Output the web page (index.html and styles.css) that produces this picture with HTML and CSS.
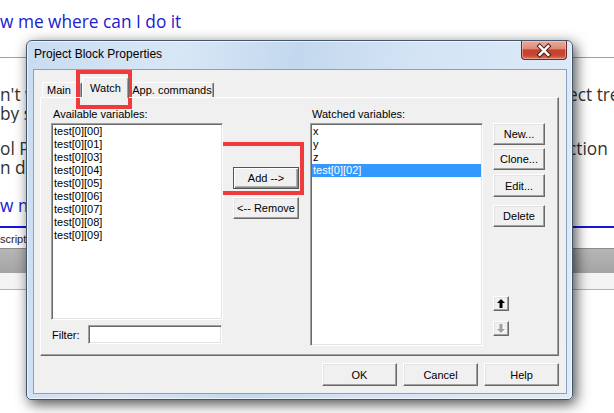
FILE: index.html
```html
<!DOCTYPE html>
<html lang="en">
<head>
  <meta charset="UTF-8">
  <title>Project Block Properties</title>
  <link rel="stylesheet" href="styles.css">
</head>
<body>
  <div class="page">
    <div class="page-link">w me where can I do it</div>
    <div class="page-rule"></div>
    <div class="page-para">
      <div class="page-line"><span>n't want to type it by hand</span><span class="right-bit">ect tree</span></div>
      <div class="page-line"><span>by selecting the variable</span></div>
    </div>
    <div class="page-para">
      <div class="page-line"><span>ol Project Block</span><span class="right-bit">ction</span></div>
      <div class="page-line"><span>n dialog</span></div>
    </div>
    <div class="page-link page-link-2">w me</div>
    <div class="page-blue-rule"></div>
    <div class="page-tabs"><span>scription</span></div>
    <div class="page-grey-band"></div>
    <div class="page-light-band"></div>
  </div>

  <div class="dialog">
    <div class="titlebar">
      <span class="title">Project Block Properties</span>
      <button class="close-btn">
        <svg width="46" height="19" viewBox="0 0 46 19">
          <path d="M18.5 5 L27.5 14 M27.5 5 L18.5 14" stroke="#4a1f17" stroke-width="4.6" stroke-linecap="square"/>
          <path d="M18.5 5 L27.5 14 M27.5 5 L18.5 14" stroke="#fff" stroke-width="2.6" stroke-linecap="square"/>
        </svg>
      </button>
    </div>

    <div class="client">
      <div class="tabs">
        <div class="tab tab-main">Main</div>
        <div class="tab tab-watch active">Watch</div>
        <div class="tab tab-app">App. commands</div>
      </div>

      <div class="pane">
        <div class="col col-avail">
          <div class="lbl">Available variables:</div>
          <ul class="listbox list-avail">
            <li>test[0][00]</li>
            <li>test[0][01]</li>
            <li>test[0][03]</li>
            <li>test[0][04]</li>
            <li>test[0][05]</li>
            <li>test[0][06]</li>
            <li>test[0][07]</li>
            <li>test[0][08]</li>
            <li>test[0][09]</li>
          </ul>
          <div class="filter-row">
            <label for="filter">Filter:</label>
            <input id="filter" class="filter-input" type="text">
          </div>
        </div>

        <div class="col col-move">
          <button class="btn btn-default btn-add">Add --&gt;</button>
          <button class="btn btn-remove">&lt;-- Remove</button>
        </div>

        <div class="col col-watched">
          <div class="lbl">Watched variables:</div>
          <ul class="listbox list-watched">
            <li>x</li>
            <li>y</li>
            <li>z</li>
            <li class="selected">test[0][02]</li>
          </ul>
        </div>

        <div class="col col-actions">
          <button class="btn btn-new">New...</button>
          <button class="btn btn-clone">Clone...</button>
          <button class="btn btn-edit">Edit...</button>
          <button class="btn btn-delete">Delete</button>
          <button class="btn arrow-btn arrow-up">
            <svg width="8" height="9" viewBox="0 0 8 9"><polygon points="4,0 8,4 5.5,4 5.5,9 2.5,9 2.5,4 0,4" fill="#000"/></svg>
          </button>
          <button class="btn arrow-btn arrow-down">
            <svg width="9" height="10" viewBox="0 0 9 10">
              <polygon points="5,10 9,6 6.5,6 6.5,1 3.5,1 3.5,6 1,6" fill="#fff"/>
              <polygon points="4,9 8,5 5.5,5 5.5,0 2.5,0 2.5,5 0,5" fill="#a0a0a0"/>
            </svg>
          </button>
        </div>
      </div>

      <div class="footer-btns">
        <button class="btn btn-foot">OK</button>
        <button class="btn btn-foot">Cancel</button>
        <button class="btn btn-foot">Help</button>
      </div>
    </div>
  </div>

  <div class="mark mark-tab"></div>
  <div class="mark mark-add"></div>
</body>
</html>
```

FILE: styles.css
```css
* { margin: 0; padding: 0; box-sizing: border-box; }

body {
  width: 614px;
  height: 413px;
  overflow: hidden;
  background: #fff;
  font-family: "Open Sans", "DejaVu Sans", sans-serif;
  color: #333;
}

/* page behind the dialog */
.page {
  padding-top: 12px;
  white-space: nowrap;
}

.page-link {
  height: 20px;
  line-height: 20px;
  font-size: 17.3px;
  color: #2020d0;
}

.page-rule {
  margin-top: 25px;
  border-top: 1px solid #a0a0a0;
}

.page-para {
  margin-top: 27px;
}

.page-para + .page-para {
  margin-top: 16px;
}

.page-line {
  display: flex;
  justify-content: space-between;
  height: 19px;
  line-height: 19px;
  font-size: 17.3px;
  overflow: hidden;
}

.right-bit {
  width: 46px;
  overflow: hidden;
}

.page-link-2 {
  margin-top: 19px;
  height: 19px;
  line-height: 19px;
}

.page-blue-rule {
  margin-top: 11px;
  height: 2px;
  background: #1515e0;
}

.page-tabs {
  height: 21px;
  padding-top: 3px;
  font-size: 11px;
  line-height: 16px;
  color: #222;
  border-bottom: 1px solid #8c8c8c;
  font-family: "Liberation Sans", Arial, sans-serif;
}

.page-grey-band {
  height: 24px;
  background: linear-gradient(#b6b6b6, #a4a4a4);
}

.page-light-band {
  height: 17px;
  background: #f4f4f4;
  border-bottom: 1px solid #b4b4b4;
}

/* dialog window */
.dialog {
  position: absolute;
  left: 26px;
  top: 40px;
  width: 547px;
  height: 360px;
  display: flex;
  flex-direction: column;
  padding: 0 5px 5px 6px;
  border: 1px solid #45556a;
  border-radius: 6px 6px 5px 5px;
  background: linear-gradient(100deg, #c8dcf1 0%, #d8e7f6 25%, #c3d8ee 45%, #d4e4f5 65%, #dfebf8 100%);
  box-shadow: 3px 4px 14px rgba(0, 0, 0, 0.7), inset 0 0 0 1px rgba(255, 255, 255, 0.6);
  font-family: "Liberation Sans", Arial, sans-serif;
  font-size: 11px;
  color: #000;
}

.titlebar {
  height: 28px;
  display: flex;
  justify-content: space-between;
  align-items: flex-start;
}

.title {
  padding: 6px 0 0 1px;
  font-size: 12px;
  line-height: 15px;
  color: #000;
}

.close-btn {
  width: 46px;
  height: 19px;
  border: 1px solid #6e2b22;
  border-top: none;
  border-radius: 0 0 4px 4px;
  background: linear-gradient(#e9ab9d 0%, #de8a79 42%, #c5412c 50%, #c74630 78%, #d9765f 100%);
  box-shadow: inset 0 0 0 1px rgba(255, 220, 210, 0.45);
  display: flex;
  align-items: center;
  justify-content: center;
}

.close-btn svg {
  display: block;
}

.client {
  flex: 1;
  display: flex;
  flex-direction: column;
  padding: 7px 7px 0 6px;
  border: 1px solid #8aa0bb;
  background: #f0f0f0;
}

/* tabs */
.tabs {
  height: 20px;
  display: flex;
  align-items: flex-end;
  padding-left: 2px;
}

.tab {
  height: 15px;
  line-height: 14px;
  border-top: 1px solid #fff;
  border-left: 1px solid #fff;
  border-right: 1px solid #696969;
  border-radius: 2px 2px 0 0;
  box-shadow: inset -1px 0 0 #a0a0a0;
  background: #f0f0f0;
  text-align: center;
}

.tab-main {
  width: 40px;
  text-align: left;
  padding-left: 4px;
}

.tab-watch {
  width: 47px;
}

.tab-app {
  width: 84px;
  margin-left: 1px;
}

.tab.active {
  position: relative;
  z-index: 2;
  height: 21px;
  margin-bottom: -1px;
  line-height: 20px;
}

.pane {
  position: relative;
  z-index: 1;
  height: 259px;
  display: flex;
  padding: 9px 0 0 10px;
  border: 1px solid;
  border-color: #fff #696969 #696969 #fff;
  box-shadow: inset -1px -1px 0 #a0a0a0;
}

.col {
  display: flex;
  flex-direction: column;
  align-items: flex-start;
}

.lbl {
  height: 14px;
  line-height: 14px;
  margin: 0 0 2px 2px;
}

.listbox {
  list-style: none;
  background: #fff;
  padding: 1px;
  border: 1px solid;
  border-color: #a0a0a0 #fff #fff #a0a0a0;
  box-shadow: inset 1px 1px 0 #696969, inset -1px -1px 0 #e3e3e3;
  overflow: hidden;
}

.listbox li {
  height: 13px;
  line-height: 13px;
  padding-left: 1px;
}

.listbox li.selected {
  background: #3399ff;
  color: #fff;
}

.col-avail {
  width: 172px;
}

.list-avail {
  width: 172px;
  height: 197px;
}

.filter-row {
  margin-top: 5px;
  height: 19px;
  display: flex;
  align-items: center;
}

.filter-row label {
  width: 37px;
  padding-left: 1px;
}

.filter-input {
  width: 134px;
  height: 19px;
  border: 1px solid;
  border-color: #a0a0a0 #fff #fff #a0a0a0;
  box-shadow: inset 1px 1px 0 #696969, inset -1px -1px 0 #e3e3e3;
  background: #fff;
  outline: none;
}

.col-move {
  width: 66px;
  margin-left: 10px;
  padding-top: 60px;
}

.col-watched {
  width: 173px;
  margin-left: 11px;
}

.list-watched {
  width: 173px;
  height: 223px;
}

.col-actions {
  width: 52px;
  margin-left: 10px;
  padding-top: 16px;
}

/* classic buttons */
.btn {
  font-family: inherit;
  font-size: 11px;
  color: #000;
  background: #f0f0f0;
  border: 1px solid;
  border-color: #fff #696969 #696969 #fff;
  box-shadow: inset -1px -1px 0 #a0a0a0, inset 1px 1px 0 #e3e3e3;
  display: flex;
  align-items: center;
  justify-content: center;
}

.btn-default {
  border: 1px solid #555;
  box-shadow: inset 1px 1px 0 #fff, inset -1px -1px 0 #888, inset -2px -2px 0 #b0b0b0;
}

.btn-add,
.btn-remove {
  width: 66px;
  height: 22px;
}

.btn-remove {
  margin-top: 8px;
}

.col-actions .btn {
  width: 52px;
  height: 22px;
}

.col-actions .btn-clone { margin-top: 3px; }
.col-actions .btn-edit { margin-top: 4px; height: 23px; }
.col-actions .btn-delete { margin-top: 8px; }

.col-actions .arrow-btn {
  width: 16px;
  height: 15px;
  margin-top: 69px;
}

.col-actions .arrow-down {
  margin-top: 10px;
}

.arrow-btn svg {
  display: block;
}

.footer-btns {
  margin-top: 7px;
  display: flex;
  justify-content: flex-end;
  gap: 6px;
}

.btn-foot {
  width: 75px;
  height: 23px;
}

/* red annotation boxes */
.mark {
  position: absolute;
  border: 4px solid #ef3b3b;
}

.mark-tab {
  left: 76px;
  top: 70px;
  width: 56px;
  height: 39px;
}

.mark-add {
  left: 214px;
  top: 142px;
  width: 90px;
  height: 53px;
}
```
